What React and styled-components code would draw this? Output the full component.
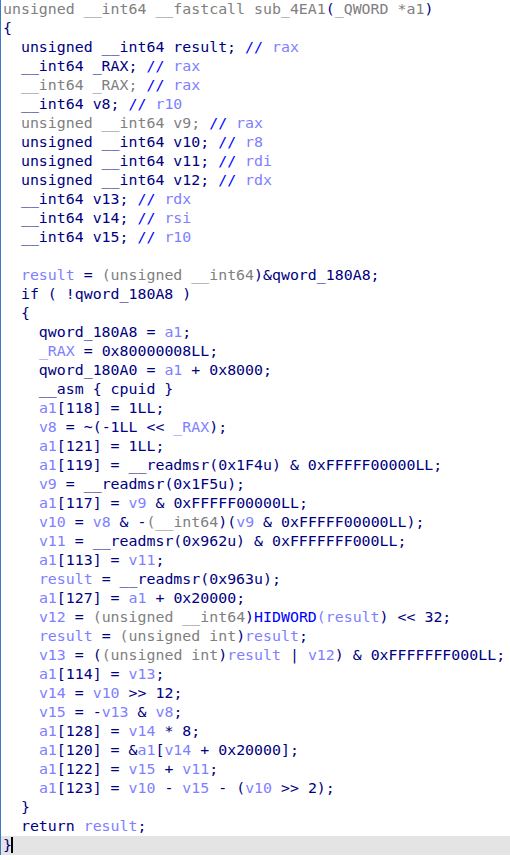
import React from "react";
import styled, { createGlobalStyle } from "styled-components";

const Global = createGlobalStyle`
  html, body { margin: 0; padding: 0; background: #ffffff; }
  body { font-family: "DejaVu Sans Mono", "Liberation Mono", monospace; }
`;

const COLORS = {
  k: "#000080",
  v: "#8080ff",
  g: "#808080",
  c: "#0000ff",
  r: "#8080ff",
  f: "#0000ff",
};

const Editor = styled.div`
  border-left: 1px solid #3c78c8;
  padding: 0;
  font-family: "DejaVu Sans Mono", "Liberation Mono", monospace;
  font-size: 14.9px;
  background: #ffffff;
`;

const Line = styled.div`
  height: 19px;
  line-height: 19px;
  white-space: pre;
  padding-left: 2px;
  background: ${(p) => (p.$current ? "#e4e4e4" : "transparent")};
  overflow: hidden;
`;

const Token = styled.span`
  color: ${(p) => COLORS[p.$kind]};
`;

const Caret = styled.span`
  display: inline-block;
  width: 2px;
  height: 16px;
  background: #000000;
  vertical-align: -3px;
  margin-left: -1px;
`;

// markup: «var»  ‹gray›  ⟦blue func⟧  {/ comment-slashes}  ¦register¦
function parse(src) {
  const out = [];
  const re = /«([^»]*)»|‹([^›]*)›|⟦([^⟧]*)⟧|¦([^¦]*)¦|(\/\/)/g;
  let last = 0;
  let m;
  while ((m = re.exec(src))) {
    if (m.index > last) out.push(["k", src.slice(last, m.index)]);
    if (m[1] !== undefined) out.push(["v", m[1]]);
    else if (m[2] !== undefined) out.push(["g", m[2]]);
    else if (m[3] !== undefined) out.push(["f", m[3]]);
    else if (m[4] !== undefined) out.push(["r", m[4]]);
    else if (m[5] !== undefined) out.push(["c", m[5]]);
    last = re.lastIndex;
  }
  if (last < src.length) out.push(["k", src.slice(last)]);
  return out;
}

const SOURCE = [
  "‹unsigned __int64 __fastcall sub_4EA1›(‹_QWORD *a1›)",
  "{",
  "  unsigned __int64 result; //¦ rax¦",
  "  __int64 _RAX; //¦ rax¦",
  "  ‹__int64 _RAX; ›//¦ rax¦",
  "  __int64 v8; //¦ r10¦",
  "  ‹unsigned __int64 v9; ›//¦ rax¦",
  "  unsigned __int64 v10; //¦ r8¦",
  "  unsigned __int64 v11; //¦ rdi¦",
  "  unsigned __int64 v12; //¦ rdx¦",
  "  __int64 v13; //¦ rdx¦",
  "  __int64 v14; //¦ rsi¦",
  "  __int64 v15; //¦ r10¦",
  "",
  "  «result» = ‹(unsigned __int64›)&qword_180A8;",
  "  if ( !qword_180A8 )",
  "  {",
  "    qword_180A8 = «a1»;",
  "    «_RAX» = 0x80000008LL;",
  "    qword_180A0 = «a1» + 0x8000;",
  "    __asm { cpuid }",
  "    «a1»[118] = 1LL;",
  "    «v8» = ~(-1LL << «_RAX»);",
  "    «a1»[121] = 1LL;",
  "    «a1»[119] = __readmsr(0x1F4u) & 0xFFFFF00000LL;",
  "    «v9» = __readmsr(0x1F5u);",
  "    «a1»[117] = «v9» & 0xFFFFF00000LL;",
  "    «v10» = «v8» & -‹(__int64›)(«v9» & 0xFFFFF00000LL);",
  "    «v11» = __readmsr(0x962u) & 0xFFFFFFF000LL;",
  "    «a1»[113] = «v11»;",
  "    «result» = __readmsr(0x963u);",
  "    «a1»[127] = «a1» + 0x20000;",
  "    «v12» = ‹(unsigned __int64›)⟦HIDWORD⟧«(result»)) << 32;",
  "    «result» = ‹(unsigned int›)«result»;",
  "    «v13» = (‹(unsigned int›)«result» | «v12») & 0xFFFFFFF000LL;",
  "    «a1»[114] = «v13»;",
  "    «v14» = «v10» >> 12;",
  "    «v15» = -«v13» & «v8»;",
  "    «a1»[128] = «v14» * 8;",
  "    «a1»[120] = &«a1»[«v14» + 0x20000];",
  "    «a1»[122] = «v15» + «v11»;",
  "    «a1»[123] = «v10» - «v15» - («v10» >> 2);",
  "  }",
  "  return «result»;",
];

const LINES = SOURCE.map((s) => parse(s.replace("«(result»))", "«(result»)")));

export default function App() {
  return (
    <>
      <Global />
      <Editor>
        {LINES.map((segs, i) => (
          <Line key={i}>
            {segs.length === 0 ? " " : segs.map(([kind, text], j) => (
              <Token key={j} $kind={kind}>{text}</Token>
            ))}
          </Line>
        ))}
        <Line $current>
          <Token $kind="k">{"}"}</Token>
          <Caret />
        </Line>
      </Editor>
    </>
  );
}
